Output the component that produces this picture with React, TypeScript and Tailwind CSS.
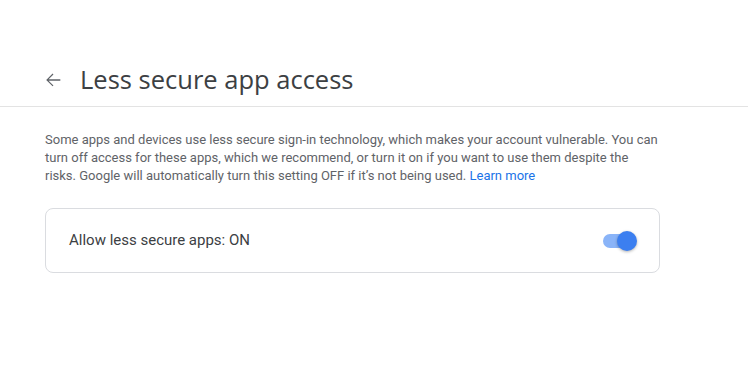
export default function App() {
  return (
    <div className="h-[380px] w-[748px] overflow-hidden bg-white font-['Roboto',sans-serif]">
      <div className="flex h-[107px] items-end border-b border-[#e3e3e3] pb-[7px]">
        <button className="ml-[41px] mb-[7px] flex h-[24px] w-[24px] items-center justify-center text-[#5f6368]">
          <svg width="22" height="22" viewBox="0 0 24 24" fill="currentColor">
            <path d="M20 11.25H7.2l5.3-5.3-.95-.95L4.6 12l6.95 6.95.95-.95-5.3-5.3H20v-1.5z" />
          </svg>
        </button>
        <h1 className="ml-[15px] mb-[2px] font-['Open_Sans',sans-serif] text-[25.5px] font-normal leading-[36px] text-[#3c4043]">
          Less secure app access
        </h1>
      </div>

      <div className="px-[45px] pt-[24px]">
        <p className="text-[13px] leading-[18px] text-[#5f6368]">
          Some apps and devices use less secure sign-in technology, which makes your account vulnerable. You can
          <br />
          turn off access for these apps, which we recommend, or turn it on if you want to use them despite the
          <br />
          risks. Google will automatically turn this setting OFF if it’s not being used.{" "}
          <a className="text-[#1a73e8]">Learn more</a>
        </p>

        <div className="mt-[23px] flex h-[65px] w-[615px] items-center justify-between rounded-[8px] border border-[#dadce0] pl-[23px] pr-[22px]">
          <span className="text-[15px] text-[#3c4043]">Allow less secure apps: ON</span>
          <Toggle />
        </div>
      </div>
    </div>
  );
}

function Toggle() {
  return (
    <div className="relative h-[20px] w-[36px]">
      <div className="absolute left-[2px] top-[3px] h-[14px] w-[30px] rounded-full bg-[#8ab4f8]" />
      <div className="absolute right-0 top-0 h-[20px] w-[20px] rounded-full bg-[#3c7ff0] shadow-[0_1px_3px_rgba(0,0,0,0.3)]" />
    </div>
  );
}
